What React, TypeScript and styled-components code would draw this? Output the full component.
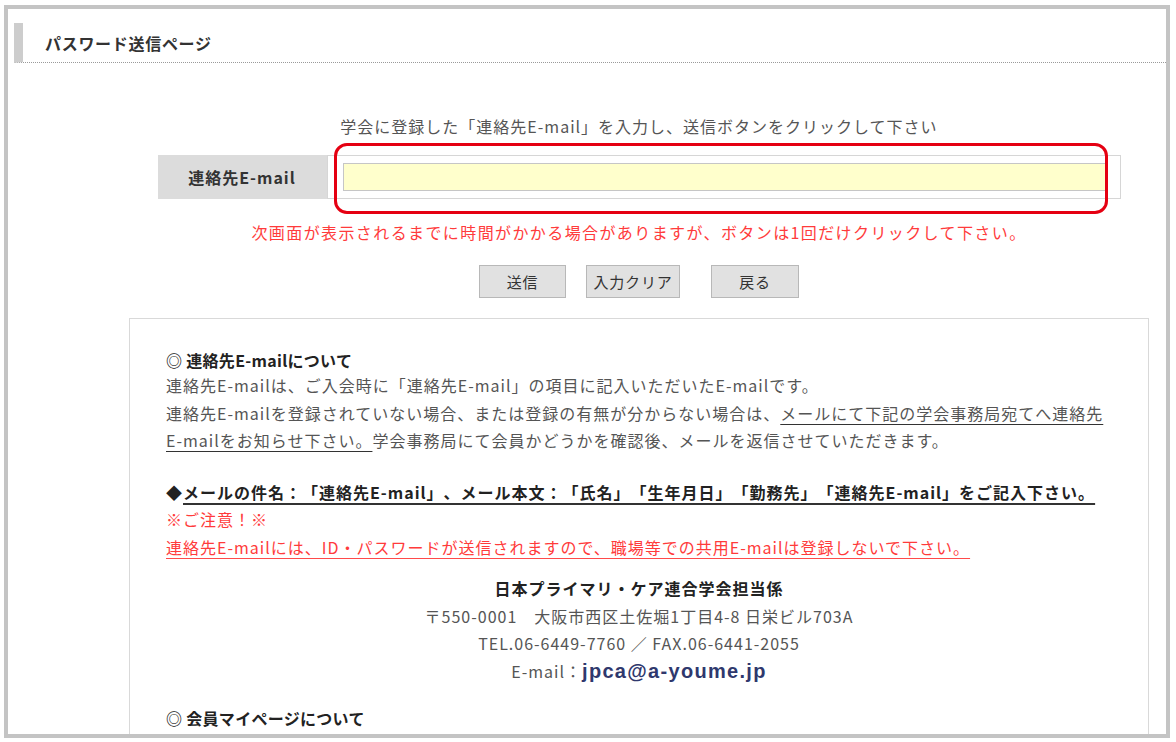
import React from "react";
import styled, { createGlobalStyle } from "styled-components";

const GlobalStyle = createGlobalStyle`
  html, body {
    margin: 0;
    padding: 0;
    background: #fff;
  }
  body {
    font-family: "Noto Sans CJK JP", "Liberation Sans", sans-serif;
    color: #4a4a4a;
    text-spacing-trim: space-all;
  }
  * {
    box-sizing: border-box;
  }
`;

const Frame = styled.div`
  margin: 5px 0 0 4px;
  width: 1166px;
  height: 733px;
  border: 4px solid #c4c4c4;
  overflow: hidden;
  background: #fff;
`;

const PageHeader = styled.div`
  display: flex;
  align-items: center;
  margin: 14px 0 0 6px;
  height: 40px;
  padding-left: 22px;
  border-left: 9px solid #cdcdcd;
  border-bottom: 1px dotted #9a9a9a;
`;

const PageTitle = styled.h1`
  margin: 0;
  font-size: 16px;
  font-weight: 700;
  color: #333;
  letter-spacing: 0.7px;
`;

const Column = styled.div`
  margin-left: 121px;
  width: 1020px;
`;

const Lead = styled.p<{ $red?: boolean; $top: number }>`
  margin: ${(p) => p.$top}px 0 0;
  text-align: center;
  font-size: 16px;
  line-height: 24px;
  letter-spacing: ${(p) => (p.$red ? "1.4px" : "1px")};
  color: ${(p) => (p.$red ? "#ff3b3b" : "#555")};
`;

const FormRow = styled.div`
  position: relative;
  display: flex;
  width: 963px;
  height: 44px;
  margin: 17px auto 0;
`;

const LabelCell = styled.div`
  display: flex;
  align-items: center;
  justify-content: center;
  width: 169px;
  background: #dcdcdc;
  font-size: 16px;
  font-weight: 700;
  color: #333;
  letter-spacing: 1px;
`;

const InputCell = styled.div`
  flex: 1;
  padding: 7px 14px 7px 15px;
  border: 1px solid #d6d6d6;
`;

const EmailInput = styled.input`
  display: block;
  width: 100%;
  height: 28px;
  border: 1px solid #c6c6c6;
  background: #ffffcc;
  outline: none;
`;

const Highlight = styled.div`
  position: absolute;
  left: 176px;
  top: -12px;
  width: 774px;
  height: 71px;
  border: 3px solid #e50012;
  border-radius: 13px;
  pointer-events: none;
`;

const ButtonRow = styled.div`
  display: flex;
  justify-content: center;
  margin-top: 21px;
`;

const Button = styled.button<{ $w: number; $gap?: number }>`
  width: ${(p) => p.$w}px;
  height: 33px;
  margin-left: ${(p) => p.$gap ?? 0}px;
  padding: 0;
  background: #e1e1e1;
  border: 1px solid #b8b8b8;
  font-family: "Noto Sans CJK JP", sans-serif;
  font-size: 15px;
  color: #333;
  letter-spacing: 0.8px;
  cursor: pointer;
`;

const InfoBox = styled.div`
  margin-top: 20px;
  height: 440px;
  padding: 29px 36px 0;
  border: 1px solid #d9d9d9;
`;

const Heading = styled.h2<{ $top?: number }>`
  margin: ${(p) => p.$top ?? 0}px 0 0;
  font-size: 16px;
  line-height: 24px;
  font-weight: 700;
  color: #222;
  letter-spacing: 0.3px;
`;

const Text = styled.p<{ $top?: number; $red?: boolean; $bold?: boolean; $center?: boolean }>`
  margin: ${(p) => p.$top ?? 0}px 0 0;
  font-size: 16px;
  line-height: 27.5px;
  letter-spacing: 1px;
  font-weight: ${(p) => (p.$bold ? 700 : 400)};
  color: ${(p) => (p.$red ? "#ff3b3b" : p.$bold ? "#222" : "#555")};
  text-align: ${(p) => (p.$center ? "center" : "left")};
`;

const Under = styled.span<{ $red?: boolean; $thick?: boolean }>`
  text-decoration: underline;
  text-decoration-color: ${(p) => (p.$red ? "#ff4a4a" : "#333")};
  text-decoration-thickness: ${(p) => (p.$thick ? "2px" : "1px")};
  text-underline-offset: 4px;
`;

const MailImage = styled.span`
  font-family: "Liberation Sans", Arial, sans-serif;
  font-weight: 700;
  font-size: 20px;
  letter-spacing: 1.3px;
  color: #2f386d;
`;

export default function App() {
  return (
    <>
      <GlobalStyle />
      <Frame>
        <PageHeader>
          <PageTitle>パスワード送信ページ</PageTitle>
        </PageHeader>
        <Column>
          <Lead $top={51}>
            学会に登録した「連絡先E-mail」を入力し、送信ボタンをクリックして下さい
          </Lead>
          <FormRow>
            <LabelCell>連絡先E-mail</LabelCell>
            <InputCell>
              <EmailInput type="text" />
            </InputCell>
            <Highlight />
          </FormRow>
          <Lead $red $top={21}>
            次画面が表示されるまでに時間がかかる場合がありますが、ボタンは1回だけクリックして下さい。
          </Lead>
          <ButtonRow>
            <Button $w={87}>送信</Button>
            <Button $w={94} $gap={20}>入力クリア</Button>
            <Button $w={88} $gap={31}>戻る</Button>
          </ButtonRow>
          <InfoBox>
            <Heading>◎ 連絡先E-mailについて</Heading>
            <Text>
              連絡先E-mailは、ご入会時に「連絡先E-mail」の項目に記入いただいたE-mailです。
              <br />
              連絡先E-mailを登録されていない場合、または登録の有無が分からない場合は、
              <Under>メールにて下記の学会事務局宛てへ連絡先</Under>
              <br />
              <Under>E-mailをお知らせ下さい。</Under>
              学会事務局にて会員かどうかを確認後、メールを返信させていただきます。
            </Text>
            <Text $bold $top={24}>
              ◆<Under $thick>メールの件名：「連絡先E-mail」、メール本文：「氏名」「生年月日」「勤務先」「連絡先E-mail」をご記入下さい。</Under>
            </Text>
            <Text $red>※ご注意！※</Text>
            <Text $red>
              <Under $red>
                連絡先E-mailには、ID・パスワードが送信されますので、職場等での共用E-mailは登録しないで下さい。
              </Under>
            </Text>
            <Text $bold $center $top={14}>
              日本プライマリ・ケア連合学会担当係
            </Text>
            <Text $center>〒550-0001　大阪市西区土佐堀1丁目4-8 日栄ビル703A</Text>
            <Text $center>TEL.06-6449-7760 ／ FAX.06-6441-2055</Text>
            <Text $center>
              E-mail：<MailImage>jpca@a-youme.jp</MailImage>
            </Text>
            <Heading $top={21}>◎ 会員マイページについて</Heading>
          </InfoBox>
        </Column>
      </Frame>
    </>
  );
}
